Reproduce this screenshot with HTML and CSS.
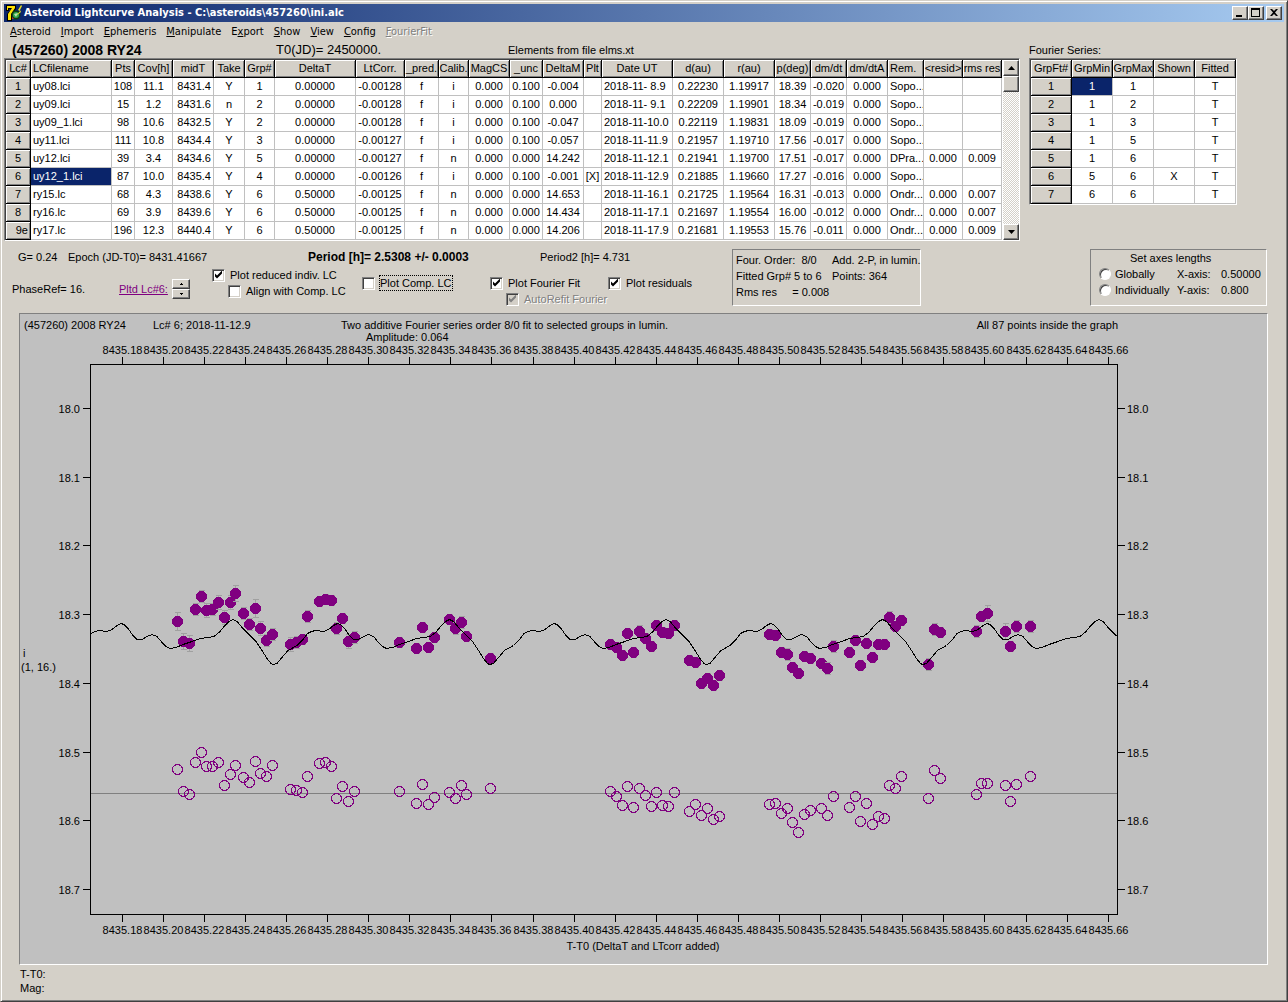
FILE: index.html
```html
<!DOCTYPE html>
<html lang="en">
<head>
  <meta charset="UTF-8" />
  <meta name="viewport" content="width=device-width, initial-scale=1.0"/>
  <title>Asteroid Lightcurve Analysis</title>
  <link rel="stylesheet" href="styles.css">
</head>
<body>
  <div class="window">
    <header class="titlebar">
      <svg class="app-icon" width="16" height="16" viewBox="0 0 16 16" aria-hidden="true">
        <path d="M0 0h10v4L6 9v7H1V9l4-5H3v2H0z" fill="#000"/>
        <path d="M1 1h8v2L5 9v6H2V9l4-6H2v2H1z" fill="#ffe000"/>
        <circle cx="10" cy="10" r="4.5" fill="#123c12"/>
        <circle cx="10" cy="10" r="3" fill="#2fa84f"/>
        <path d="M8 9l2 3 2-4z" fill="#b8e0b0"/>
        <path d="M15 0l-3 5 2 1-4 5 5-4-1-2 2-4z" fill="#e8e020"/>
        <path d="M6 12l2 2H6z" fill="#c03020"/>
      </svg>
      <h1>Asteroid Lightcurve Analysis - C:\asteroids\457260\ini.alc</h1>
      <div class="window-buttons">
        <button type="button" aria-label="Minimize"><svg width="12" height="10" viewBox="0 0 12 10"><path d="M2 7h6v2H2z"/></svg></button>
        <button type="button" aria-label="Maximize"><svg width="12" height="10" viewBox="0 0 12 10"><path d="M1 0h9v9H1zM2 2v6h7V2z" fill-rule="evenodd"/></svg></button>
        <button type="button" aria-label="Close" class="close"><svg width="12" height="10" viewBox="0 0 12 10"><path d="M2 1h2l2 2 2-2h2L7 4.5 10 8H8L6 6 4 8H2l3-3.5z"/></svg></button>
      </div>
    </header>

    <nav class="menu">
      <button type="button"><u>A</u>steroid</button>
      <button type="button"><u>I</u>mport</button>
      <button type="button"><u>E</u>phemeris</button>
      <button type="button"><u>M</u>anipulate</button>
      <button type="button">E<u>x</u>port</button>
      <button type="button"><u>S</u>how</button>
      <button type="button"><u>V</u>iew</button>
      <button type="button"><u>C</u>onfig</button>
      <button type="button" disabled><u>F</u>ourierFit</button>
    </nav>

    <section class="tables">
      <div class="lightcurves">
        <div class="heading">
          <h2>(457260) 2008 RY24</h2>
          <span class="epoch-zero">T0(JD)= 2450000.</span>
          <span>Elements from file elms.xt</span>
        </div>
        <div class="grid-box">
          <table class="grid lc-grid">
            <colgroup>
              <col class="w25"><col class="w81"><col class="w23"><col class="w38"><col class="w41"><col class="w31"><col class="w30"><col class="w81">
              <col class="w49"><col class="w34"><col class="w30"><col class="w41"><col class="w33"><col class="w41"><col class="w18"><col class="w71">
              <col class="w51"><col class="w51"><col class="w36"><col class="w36"><col class="w41"><col class="w36"><col class="w39"><col class="w39">
            </colgroup>
            <thead>
              <tr><th>Lc#</th><th class="left">LCfilename</th><th>Pts</th><th>Cov[h]</th><th>midT</th><th>Take</th><th>Grp#</th><th>DeltaT</th><th>LtCorr.</th><th>_pred.</th><th>Calib.</th><th>MagCS</th><th>_unc</th><th>DeltaM</th><th>Plt</th><th>Date UT</th><th>d(au)</th><th>r(au)</th><th>p(deg)</th><th>dm/dt</th><th>dm/dtA</th><th class="left">Rem.</th><th>&lt;resid&gt;</th><th>rms res</th></tr>
            </thead>
            <tbody>
              <tr><th>1</th><td class="left">uy08.lci</td><td>108</td><td>11.1</td><td class="right">8431.4</td><td>Y</td><td>1</td><td>0.00000</td><td>-0.00128</td><td>f</td><td>i</td><td>0.000</td><td>0.100</td><td>-0.004</td><td></td><td class="left">2018-11- 8.9</td><td>0.22230</td><td>1.19917</td><td>18.39</td><td>-0.020</td><td>0.000</td><td class="left">Sopo...</td><td></td><td></td></tr>
              <tr><th>2</th><td class="left">uy09.lci</td><td>15</td><td>1.2</td><td class="right">8431.6</td><td>n</td><td>2</td><td>0.00000</td><td>-0.00128</td><td>f</td><td>i</td><td>0.000</td><td>0.100</td><td>0.000</td><td></td><td class="left">2018-11- 9.1</td><td>0.22209</td><td>1.19901</td><td>18.34</td><td>-0.019</td><td>0.000</td><td class="left">Sopo...</td><td></td><td></td></tr>
              <tr><th>3</th><td class="left">uy09_1.lci</td><td>98</td><td>10.6</td><td class="right">8432.5</td><td>Y</td><td>2</td><td>0.00000</td><td>-0.00128</td><td>f</td><td>i</td><td>0.000</td><td>0.100</td><td>-0.047</td><td></td><td class="left">2018-11-10.0</td><td>0.22119</td><td>1.19831</td><td>18.09</td><td>-0.019</td><td>0.000</td><td class="left">Sopo...</td><td></td><td></td></tr>
              <tr><th>4</th><td class="left">uy11.lci</td><td>111</td><td>10.8</td><td class="right">8434.4</td><td>Y</td><td>3</td><td>0.00000</td><td>-0.00127</td><td>f</td><td>i</td><td>0.000</td><td>0.100</td><td>-0.057</td><td></td><td class="left">2018-11-11.9</td><td>0.21957</td><td>1.19710</td><td>17.56</td><td>-0.017</td><td>0.000</td><td class="left">Sopo...</td><td></td><td></td></tr>
              <tr><th>5</th><td class="left">uy12.lci</td><td>39</td><td>3.4</td><td class="right">8434.6</td><td>Y</td><td>5</td><td>0.00000</td><td>-0.00127</td><td>f</td><td>n</td><td>0.000</td><td>0.000</td><td>14.242</td><td></td><td class="left">2018-11-12.1</td><td>0.21941</td><td>1.19700</td><td>17.51</td><td>-0.017</td><td>0.000</td><td class="left">DPra...</td><td>0.000</td><td>0.009</td></tr>
              <tr><th>6</th><td class="left selected">uy12_1.lci</td><td>87</td><td>10.0</td><td class="right">8435.4</td><td>Y</td><td>4</td><td>0.00000</td><td>-0.00126</td><td>f</td><td>i</td><td>0.000</td><td>0.100</td><td>-0.001</td><td>[X]</td><td class="left">2018-11-12.9</td><td>0.21885</td><td>1.19660</td><td>17.27</td><td>-0.016</td><td>0.000</td><td class="left">Sopo...</td><td></td><td></td></tr>
              <tr><th>7</th><td class="left">ry15.lc</td><td>68</td><td>4.3</td><td class="right">8438.6</td><td>Y</td><td>6</td><td>0.50000</td><td>-0.00125</td><td>f</td><td>n</td><td>0.000</td><td>0.000</td><td>14.653</td><td></td><td class="left">2018-11-16.1</td><td>0.21725</td><td>1.19564</td><td>16.31</td><td>-0.013</td><td>0.000</td><td class="left">Ondr...</td><td>0.000</td><td>0.007</td></tr>
              <tr><th>8</th><td class="left">ry16.lc</td><td>69</td><td>3.9</td><td class="right">8439.6</td><td>Y</td><td>6</td><td>0.50000</td><td>-0.00125</td><td>f</td><td>n</td><td>0.000</td><td>0.000</td><td>14.434</td><td></td><td class="left">2018-11-17.1</td><td>0.21697</td><td>1.19554</td><td>16.00</td><td>-0.012</td><td>0.000</td><td class="left">Ondr...</td><td>0.000</td><td>0.007</td></tr>
              <tr><th class="right">9e</th><td class="left">ry17.lc</td><td>196</td><td>12.3</td><td class="right">8440.4</td><td>Y</td><td>6</td><td>0.50000</td><td>-0.00125</td><td>f</td><td>n</td><td>0.000</td><td>0.000</td><td>14.206</td><td></td><td class="left">2018-11-17.9</td><td>0.21681</td><td>1.19553</td><td>15.76</td><td>-0.011</td><td>0.000</td><td class="left">Ondr...</td><td>0.000</td><td>0.009</td></tr>
            </tbody>
          </table>
          <div class="scrollbar">
            <button type="button" aria-label="Scroll up"><svg width="7" height="4" viewBox="0 0 7 4"><path d="M0 4l3.5-4L7 4z"/></svg></button>
            <div class="thumb"></div>
            <button type="button" class="down" aria-label="Scroll down"><svg width="7" height="4" viewBox="0 0 7 4"><path d="M0 0h7L3.5 4z"/></svg></button>
          </div>
        </div>
      </div>

      <div class="fourier">
        <div class="heading">Fourier Series:</div>
        <div class="grid-box">
          <table class="grid fs-grid">
            <thead>
              <tr><th>GrpFt#</th><th>GrpMin</th><th>GrpMax</th><th>Shown</th><th>Fitted</th></tr>
            </thead>
            <tbody>
              <tr><th>1</th><td class="selected">1</td><td>1</td><td></td><td>T</td></tr>
              <tr><th>2</th><td>1</td><td>2</td><td></td><td>T</td></tr>
              <tr><th>3</th><td>1</td><td>3</td><td></td><td>T</td></tr>
              <tr><th>4</th><td>1</td><td>5</td><td></td><td>T</td></tr>
              <tr><th>5</th><td>1</td><td>6</td><td></td><td>T</td></tr>
              <tr><th>6</th><td>5</td><td>6</td><td>X</td><td>T</td></tr>
              <tr><th>7</th><td>6</td><td>6</td><td></td><td>T</td></tr>
            </tbody>
          </table>
        </div>
      </div>
    </section>

    <section class="settings">
      <div class="options">
        <div class="params">
          <span>G= 0.24</span>
          <span>Epoch (JD-T0)= 8431.41667</span>
          <strong>Period [h]= 2.5308 +/- 0.0003</strong>
          <span>Period2 [h]= 4.731</span>
        </div>
        <div class="checks">
          <div class="phase">
            <span>PhaseRef= 16.</span>
            <a href="#plot">Pltd Lc#6:</a>
            <div class="spinner">
              <button type="button" aria-label="Next lightcurve"><svg width="3" height="2" viewBox="0 0 3 2"><path d="M1 0h1v1h1v1H0V1h1z"/></svg></button>
              <button type="button" aria-label="Previous lightcurve"><svg width="3" height="2" viewBox="0 0 3 2"><path d="M0 0h3v1H2v1H1V1H0z"/></svg></button>
            </div>
          </div>
          <div class="stack">
            <label><input type="checkbox" checked><span>Plot reduced indiv. LC</span></label>
            <label class="indent"><input type="checkbox"><span>Align with Comp. LC</span></label>
          </div>
          <div class="stack lower">
            <label><input type="checkbox"><span class="focused">Plot Comp. LC</span></label>
          </div>
          <div class="stack lower">
            <label><input type="checkbox" checked><span>Plot Fourier Fit</span></label>
            <label class="indent"><input type="checkbox" checked disabled><span>AutoRefit Fourier</span></label>
          </div>
          <div class="stack lower">
            <label><input type="checkbox" checked><span>Plot residuals</span></label>
          </div>
        </div>
      </div>

      <div class="panel fit-info">
        <span>Four. Order:  8/0</span><span>Add. 2-P, in lumin.</span>
        <span>Fitted Grp# 5 to 6</span><span>Points: 364</span>
        <span>Rms res     = 0.008</span>
      </div>

      <div class="panel axes">
        <div class="axes-title">Set axes lengths</div>
        <label><input type="radio" name="axes"><span>Globally</span></label><span>X-axis:</span><span>0.50000</span>
        <label><input type="radio" name="axes"><span>Individually</span></label><span>Y-axis:</span><span>0.800</span>
      </div>
    </section>

    <main class="plot">
      <svg id="plot" viewBox="20 314 1247 650" role="img" aria-label="Lightcurve">
        <text x="24" y="329">(457260) 2008 RY24</text>
        <text x="153" y="329">Lc# 6; 2018-11-12.9</text>
        <text x="341" y="329">Two additive Fourier series order 8/0 fit to selected groups in lumin.</text>
        <text x="366" y="341">Amplitude: 0.064</text>
        <text x="1118" y="329" class="end">All 87 points inside the graph</text>
        <text x="23" y="657">i</text>
        <text x="21" y="671">(1, 16.)</text>
        <text x="643" y="950" class="mid">T-T0 (DeltaT and LTcorr added)</text>
      </svg>
    </main>

    <footer class="status">
      <div>T-T0:</div>
      <div>Mag:</div>
    </footer>
  </div>

  <script src="plot.js"></script>
</body>
</html>
```

FILE: styles.css
```css
* {
  box-sizing: border-box;
}
body {
  margin: 0;
  background: #d4d0c8;
  color: #000;
  font-family: "Liberation Sans", Arial, sans-serif;
  font-size: 11px;
  line-height: 16px;
}
button {
  font: inherit;
  color: inherit;
  padding: 0;
  border: none;
  background: #d4d0c8;
}
svg {
  display: block;
}
.window {
  min-height: 100vh;
  padding: 3px;
  border: 1px solid;
  border-color: #d4d0c8 #404040 #404040 #d4d0c8;
  box-shadow: inset 1px 1px #fff, inset -1px -1px #808080;
}

/* title bar and menu */
.titlebar {
  display: flex;
  align-items: center;
  height: 18px;
  padding: 0 2px;
  gap: 2px;
  background: linear-gradient(to right, #0a246a, #a6caf0);
}
.titlebar h1 {
  flex: 1;
  margin: 0;
  color: #fff;
  font: bold 11px/18px "DejaVu Sans Condensed", "DejaVu Sans", sans-serif;
  white-space: nowrap;
}
.window-buttons {
  display: flex;
}
.window-buttons button,
.scrollbar button,
.thumb,
.spinner button {
  display: flex;
  align-items: center;
  justify-content: center;
  background: #d4d0c8;
  border: 1px solid;
  border-color: #fff #404040 #404040 #fff;
  box-shadow: inset -1px -1px #808080;
}
.window-buttons button {
  width: 16px;
  height: 14px;
}
.window-buttons .close {
  margin-left: 2px;
}
.menu {
  display: flex;
  gap: 10px;
  height: 19px;
  padding: 0 6px;
}
.menu button {
  font: 11px/19px "DejaVu Sans Condensed", "DejaVu Sans", sans-serif;
}
.menu button:disabled {
  color: #808080;
  text-shadow: 1px 1px #fff;
}

/* tables */
.tables {
  display: flex;
  align-items: flex-start;
  gap: 9px;
}
.heading {
  display: flex;
  align-items: center;
  height: 17px;
}
.lightcurves .heading {
  display: grid;
  grid-template-columns: 264px 232px 1fr;
  padding-left: 8px;
}
.heading h2 {
  margin: 0;
  font-size: 14px;
}
.epoch-zero {
  font-size: 13px;
}
.grid-box {
  display: flex;
  border: 1px solid;
  border-color: #808080 #fff #fff #808080;
  box-shadow: inset 1px 1px #404040;
  padding: 1px 0 0 1px;
  background: #fff;
}
.grid {
  table-layout: fixed;
  border-collapse: separate;
  border-spacing: 0;
}
.lc-grid {
  width: 996px;
}
.fs-grid {
  width: 205px;
}
.grid th,
.grid td {
  height: 18px;
  padding: 0;
  border-right: 1px solid #c0c0c0;
  border-bottom: 1px solid #c0c0c0;
  font-weight: normal;
  line-height: 17px;
  text-align: center;
  white-space: pre;
  overflow: hidden;
}
.grid th {
  background: #d4d0c8;
  border-color: #000;
  box-shadow: inset 1px 1px #fff, inset -1px -1px #808080;
}
.grid .left {
  text-align: left;
  padding-left: 2px;
}
.grid .right {
  text-align: right;
  padding-right: 2px;
}
.grid .selected {
  background: #0a246a;
  color: #fff;
}
.w18 { width: 18px; }
.w23 { width: 23px; }
.w25 { width: 25px; }
.w30 { width: 30px; }
.w31 { width: 31px; }
.w33 { width: 33px; }
.w34 { width: 34px; }
.w36 { width: 36px; }
.w38 { width: 38px; }
.w39 { width: 39px; }
.w41 { width: 41px; }
.w49 { width: 49px; }
.w51 { width: 51px; }
.w71 { width: 71px; }
.w81 { width: 81px; }
.scrollbar {
  display: flex;
  flex-direction: column;
  width: 16px;
  margin-left: 1px;
  background: repeating-conic-gradient(#fff 0 25%, #d4d0c8 0 50%) 0 0 / 2px 2px;
}
.scrollbar button,
.thumb {
  height: 16px;
}
.scrollbar .down {
  margin-top: auto;
}

/* period, check boxes, panels */
.settings {
  display: flex;
  align-items: flex-start;
  padding: 8px 17px 6px 0;
}
.options {
  width: 728px;
}
.params {
  display: grid;
  grid-template-columns: 50px 240px 232px 1fr;
  padding: 0 0 0 14px;
  height: 18px;
  line-height: 16px;
}
.params strong {
  font-size: 12px;
}
.checks {
  display: grid;
  grid-template-columns: 208px 150px 128px 118px 1fr;
}
.phase {
  display: grid;
  grid-template-columns: 107px 53px 18px;
  align-items: center;
  padding: 4px 0 0 8px;
}
.phase a {
  color: #800080;
}
.spinner button {
  width: 18px;
  height: 10px;
}
.stack.lower {
  padding-top: 8px;
}
.stack label,
.axes label {
  display: flex;
  align-items: center;
  gap: 4px;
  height: 16px;
  white-space: nowrap;
}
.stack .indent {
  margin-left: 16px;
}
.stack label span {
  padding: 0 1px;
}
.focused {
  outline: 1px dotted #000;
  outline-offset: -1px;
}
input[type="checkbox"] {
  appearance: none;
  width: 13px;
  height: 13px;
  margin: 0;
  padding: 1px;
  background: #fff;
  border: 1px solid;
  border-color: #808080 #fff #fff #808080;
  box-shadow: inset 1px 1px #404040, inset -1px -1px #d4d0c8;
}
input[type="checkbox"]:checked::before {
  content: "";
  display: block;
  width: 9px;
  height: 9px;
  background: #000;
  clip-path: polygon(1px 3px, 3px 5px, 8px 0, 8px 3px, 3px 8px, 1px 6px);
}
input[type="checkbox"]:disabled {
  background: #d4d0c8;
}
input[type="checkbox"]:disabled::before {
  background: #808080;
}
input:disabled + span {
  color: #808080;
  text-shadow: 1px 1px #fff;
}
input[type="radio"] {
  appearance: none;
  width: 12px;
  height: 12px;
  margin: 0;
  background: #fff;
  border: 1px solid;
  border-color: #808080 #fff #fff #808080;
  border-radius: 50%;
  box-shadow: inset 1px 1px #404040;
}
.panel {
  display: grid;
  height: 57px;
  border: 1px solid;
  border-color: #808080 #fff #fff #808080;
  white-space: pre;
}
.fit-info {
  width: 189px;
  grid-template-columns: 96px 1fr;
  align-content: start;
  padding: 2px 0 0 3px;
}
.axes {
  width: 177px;
  margin-left: auto;
  grid-template-columns: 78px 44px 1fr;
  align-content: start;
  padding: 0 0 0 8px;
}
.axes-title {
  grid-column: 1 / -1;
  padding-left: 31px;
}

/* plot */
.plot {
  margin: 0 16px 0 15px;
  border: 1px solid;
  border-color: #808080 #fff #fff #808080;
  background: #c0c0c0;
}
.plot svg {
  width: 100%;
}
.plot text {
  font-size: 11px;
}
.plot .mid {
  text-anchor: middle;
}
.plot .end {
  text-anchor: end;
}
.plot path,
.plot circle {
  fill: none;
  shape-rendering: crispEdges;
}
.plot .frame,
.plot .fit {
  stroke: #000;
}
.plot .zero {
  stroke: #808080;
}
.plot .error {
  stroke: #a0a0a0;
}
.plot .point {
  fill: #800080;
}
.plot .residual {
  stroke: #800080;
}
.status {
  padding: 2px 16px 0;
  line-height: 14px;
}
```

FILE: plot.js
```js
const svg = document.getElementById('plot');
const frame = { left: 90, right: 1117, top: 364, bottom: 914 };

// x, magnitude, residual, half length of the error bar
const points = [
  [177, 621, 769, 9], [183, 641, 791, 8], [189, 643, 794, 8], [195, 609, 762, 6], [201, 596, 752, 6],
  [206, 610, 766, 7], [212, 609, 766, 6], [218, 602, 762, 7], [224, 617, 785, 7], [230, 602, 774, 7],
  [235, 593, 765, 8], [243, 613, 777, 6], [249, 624, 782, 6], [255, 608, 761, 9], [260, 628, 773, 7],
  [266, 640, 776, 6], [272, 634, 765, 6], [290, 644, 789, 7], [296, 642, 790, 6], [302, 639, 792, 5],
  [307, 616, 776, 6], [319, 601, 763, 5], [325, 599, 762, 5], [331, 600, 766, 5], [336, 628, 798, 6],
  [342, 618, 786, 5], [348, 641, 801, 7], [354, 637, 791, 6], [399, 642, 791, 5], [416, 648, 803, 5],
  [422, 627, 784, 5], [428, 647, 804, 5], [434, 637, 797, 5], [449, 619, 792, 5], [455, 628, 798, 6],
  [461, 622, 785, 6], [466, 636, 794, 5], [490, 658, 788, 5], [610, 644, 791, 5], [616, 647, 796, 5],
  [622, 655, 805, 5], [627, 633, 786, 5], [633, 652, 807, 5], [639, 631, 788, 6], [645, 638, 795, 5],
  [651, 646, 806, 5], [656, 625, 792, 5], [662, 632, 805, 5], [668, 633, 806, 5], [674, 625, 792, 5],
  [689, 660, 811, 5], [695, 662, 804, 5], [701, 683, 815, 5], [707, 678, 808, 5], [713, 685, 819, 5],
  [719, 675, 816, 5], [769, 634, 804, 5], [775, 635, 803, 5], [781, 652, 813, 5], [787, 654, 808, 6],
  [792, 667, 822, 5], [798, 673, 832, 5], [804, 656, 814, 5], [810, 658, 810, 5], [821, 663, 808, 5],
  [827, 668, 815, 6], [833, 646, 796, 6], [849, 652, 807, 5], [855, 640, 796, 5], [860, 665, 821, 5],
  [866, 643, 803, 5], [872, 657, 824, 5], [878, 644, 816, 5], [884, 644, 818, 5], [889, 617, 785, 6],
  [895, 626, 788, 5], [901, 620, 776, 5], [928, 664, 798, 6], [934, 629, 770, 6], [940, 632, 778, 5],
  [976, 631, 794, 6], [981, 616, 783, 5], [987, 613, 783, 8], [1005, 631, 785, 8], [1010, 646, 801, 5],
  [1016, 626, 784, 6], [1030, 626, 776, 6]
];

// one period of the fitted curve
const period = 216.5;
const cycle = [
  [91, 633], [95, 631], [99, 630], [107, 631], [112, 629], [117, 625], [121, 623], [124, 624], [128, 628], [133, 635],
  [137, 639], [142, 639], [147, 636], [152, 634], [157, 636], [162, 642], [166, 646], [170, 648], [176, 647],
  [183, 644], [192, 641], [200, 638], [208, 637], [214, 636], [220, 631], [225, 625], [229, 621], [233, 619],
  [237, 621], [243, 628], [250, 635], [256, 641], [262, 650], [267, 658], [271, 663], [273, 664], [277, 663],
  [282, 657], [288, 650], [297, 645], [303, 639]
];

function add(name, attrs, text) {
  const el = document.createElementNS('http://www.w3.org/2000/svg', name);
  for (const key in attrs) el.setAttribute(key, attrs[key]);
  if (text) el.textContent = text;
  svg.appendChild(el);
}

let axes = `M${frame.left + 0.5} ${frame.top + 0.5}H${frame.right + 0.5}V${frame.bottom + 0.5}H${frame.left + 0.5}Z`;

for (let k = 0; k < 25; k++) {
  const x = Math.floor(122.25 + 41.08 * k) + 0.5;
  const label = (8435.18 + 0.02 * k).toFixed(2);
  axes += `M${x} ${frame.top}v-7M${x} ${frame.bottom}v8`;
  add('text', { x: x, y: 354, class: 'mid' }, label);
  add('text', { x: x, y: 934, class: 'mid' }, label);
}

for (let k = 0; k < 8; k++) {
  const y = Math.floor(408.4 + 68.75 * k) + 0.5;
  const label = (18 + 0.1 * k).toFixed(1);
  axes += `M${frame.left} ${y}h-7M${frame.right + 1} ${y}h7`;
  add('text', { x: 80, y: y + 4, class: 'end' }, label);
  add('text', { x: 1127, y: y + 4 }, label);
}

add('path', { d: `M${frame.left + 1} 793.5H${frame.right}`, class: 'zero' });
add('path', { d: axes, class: 'frame' });

points.forEach(([x, mag, res, err]) => {
  const cx = x + 0.5;
  add('path', { d: `M${cx} ${mag - err}v${2 * err + 1}M${x - 2} ${mag - err + 0.5}h6M${x - 2} ${mag + err + 0.5}h6`, class: 'error' });
  add('circle', { cx: cx, cy: mag + 0.5, r: 5.5, class: 'point' });
  add('circle', { cx: cx, cy: res + 0.5, r: 5, class: 'residual' });
});

const curve = [];
for (let n = 0; n < 5; n++) {
  cycle.forEach(([x, y]) => {
    const px = x + n * period;
    if (px <= frame.right) curve.push(`${px},${y + 0.5}`);
  });
}
add('path', { d: 'M' + curve.join('L') + `L${frame.right},636`, class: 'fit' });
```
